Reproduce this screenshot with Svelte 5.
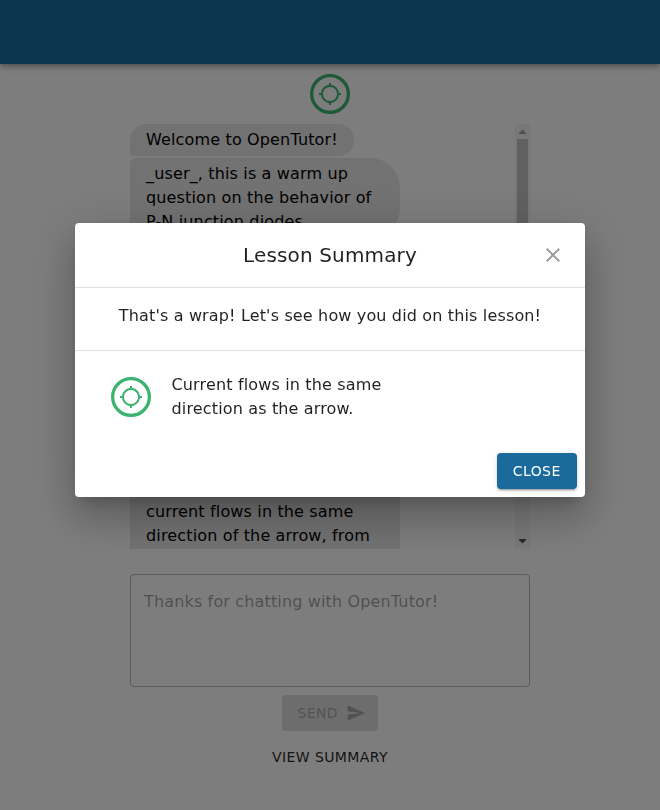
<script>
  const targetPath =
    'M20.94 11c-.46-4.17-3.77-7.48-7.94-7.94V1h-2v2.06C6.83 3.52 3.52 6.83 3.06 11H1v2h2.06c.46 4.17 3.77 7.48 7.94 7.94V23h2v-2.06c4.17-.46 7.48-3.77 7.94-7.94H23v-2h-2.06zM12 19c-3.87 0-7-3.13-7-7s3.13-7 7-7 7 3.13 7 7-3.13 7-7 7z';
</script>

{#snippet target()}
  <svg class="target" viewBox="0 0 44 44" width="40" height="40">
    <circle cx="22" cy="22" r="20.2" fill="none" stroke="#3cb371" stroke-width="3.6" />
    <svg x="8.8" y="8.8" width="26.4" height="26.4" viewBox="0 0 24 24"><path d={targetPath} /></svg>
  </svg>
{/snippet}

<div class="page">
  <header class="appbar"></header>
  <main>
    {@render target()}
    <div class="thread">
      <div class="messages">
        <div class="bubble first">Welcome to OpenTutor!</div>
        <div class="bubble second">_user_, this is a warm up question on the behavior of P-N junction diodes.</div>
        <div class="bubble last">current flows in the same direction of the arrow, from</div>
      </div>
      <div class="scrollbar">
        <svg class="up" width="15" height="15" viewBox="0 0 15 15"><path d="M4 10h7V9L7.5 5.5 4 9z" /></svg>
        <div class="thumb"></div>
        <svg class="down" width="15" height="15" viewBox="0 0 15 15"><path d="M4 5h7v1L7.5 9.5 4 6z" /></svg>
      </div>
    </div>
    <div class="field">Thanks for chatting with OpenTutor!</div>
    <button class="btn send" disabled>
      <span>Send</span>
      <svg viewBox="0 0 24 24" width="20" height="20"><path d="M2.01 21L23 12 2.01 3 2 10l15 2-15 2z" /></svg>
    </button>
    <button class="btn view">View Summary</button>
  </main>
</div>

<div class="backdrop">
  <div class="dialog" role="dialog">
    <div class="title">
      <h2>Lesson Summary</h2>
      <button class="x" aria-label="close">
        <svg viewBox="0 0 24 24" width="24" height="24"><path d="M19 6.41L17.59 5 12 10.59 6.41 5 5 6.41 10.59 12 5 17.59 6.41 19 12 13.41 17.59 19 19 17.59 13.41 12z" /></svg>
      </button>
    </div>
    <p class="wrap">That's a wrap! Let's see how you did on this lesson!</p>
    <div class="result">
      {@render target()}
      <p>Current flows in the same direction as the arrow.</p>
    </div>
    <div class="actions"><button class="btn close">Close</button></div>
  </div>
</div>

<style>
  :global(body) {
    margin: 0;
    overflow: hidden;
    background: #fafafa;
    font: 16px/24px "DejaVu Sans", sans-serif;
    letter-spacing: 0.00938em;
  }
  .page {
    height: 810px;
    background: #fafafa;
    color: #000;
  }
  .appbar {
    position: relative;
    height: 64px;
    background: #1b6a9c;
    box-shadow: 0 2px 4px -1px rgba(0, 0, 0, 0.2), 0 4px 5px rgba(0, 0, 0, 0.14), 0 1px 10px rgba(0, 0, 0, 0.12);
  }
  main {
    display: flex;
    flex-direction: column;
    align-items: center;
    width: 400px;
    margin: 0 auto;
    padding-top: 10px;
  }
  .target {
    flex: none;
    display: block;
    fill: #3cb371;
  }
  .thread {
    display: flex;
    width: 400px;
    height: 425px;
    margin-top: 10px;
    overflow: hidden;
  }
  .messages {
    flex: 1;
    display: flex;
    flex-direction: column;
    align-items: flex-start;
    gap: 2px;
  }
  .bubble {
    box-sizing: border-box;
    flex: none;
    max-width: 270px;
    padding: 4px 16px;
    background: #e4e4e4;
  }
  .first {
    border-radius: 30px 30px 30px 5px;
  }
  .second {
    width: 270px;
    border-radius: 5px 30px 30px 5px;
  }
  .last {
    width: 270px;
    height: 70px;
    margin-top: 256px;
  }
  .scrollbar {
    width: 15px;
    height: 425px;
    display: flex;
    flex-direction: column;
    align-items: center;
    background: #f1f1f1;
  }
  .scrollbar svg {
    flex: none;
  }
  .up {
    fill: #a3a3a3;
  }
  .down {
    margin-top: auto;
    fill: #505050;
  }
  .thumb {
    width: 11px;
    height: 160px;
    background: #c1c1c1;
  }
  .field {
    box-sizing: border-box;
    width: 400px;
    height: 113px;
    margin-top: 25px;
    padding: 15px 13px;
    border: 1px solid rgba(0, 0, 0, 0.26);
    border-radius: 4px;
    color: rgba(0, 0, 0, 0.38);
  }
  .btn {
    box-sizing: border-box;
    height: 36px;
    display: flex;
    align-items: center;
    justify-content: center;
    padding: 6px 16px;
    border: 0;
    border-radius: 4px;
    background: none;
    font: 14px/24px "DejaVu Sans", sans-serif;
    letter-spacing: 0.02857em;
    text-transform: uppercase;
    white-space: nowrap;
  }
  .send {
    width: 96px;
    margin-top: 8px;
    padding: 6px 12px 6px 15px;
    gap: 7.5px;
    background: rgba(0, 0, 0, 0.12);
    color: rgba(0, 0, 0, 0.26);
    fill: rgba(0, 0, 0, 0.26);
  }
  .view {
    margin-top: 8px;
    color: rgba(0, 0, 0, 0.87);
  }
  .backdrop {
    box-sizing: border-box;
    position: fixed;
    inset: 0;
    display: flex;
    align-items: center;
    justify-content: center;
    padding-bottom: 90px;
    background: rgba(0, 0, 0, 0.5);
  }
  .dialog {
    width: 510px;
    height: 274px;
    display: flex;
    flex-direction: column;
    border-radius: 4px;
    background: #fff;
    color: rgba(0, 0, 0, 0.87);
    box-shadow: 0 11px 15px -7px rgba(0, 0, 0, 0.2), 0 24px 38px 3px rgba(0, 0, 0, 0.14), 0 9px 46px 8px rgba(0, 0, 0, 0.12);
  }
  .title {
    position: relative;
    height: 64px;
    display: flex;
    align-items: center;
    justify-content: center;
  }
  h2 {
    margin: 0;
    font-size: 20px;
    font-weight: 400;
    line-height: 32px;
    letter-spacing: 0.0075em;
  }
  .x {
    position: absolute;
    right: 8px;
    top: 8px;
    display: flex;
    padding: 12px;
    border: 0;
    background: none;
    fill: #9e9e9e;
  }
  p {
    margin: 0;
  }
  .wrap {
    padding: 16px 0 22px;
    border: solid #e0e0e0;
    border-width: 1px 0;
    text-align: center;
  }
  .result {
    display: flex;
    align-items: center;
    gap: 20.5px;
    padding: 22px 36px 0;
  }
  .result p {
    width: 240px;
  }
  .actions {
    display: flex;
    justify-content: flex-end;
    margin-top: auto;
    padding: 8px;
  }
  .close {
    width: 80px;
    padding-right: 16.6px;
    padding-left: 16px;
    background: #1b6a9c;
    color: #fff;
    box-shadow: 0 3px 1px -2px rgba(0, 0, 0, 0.2), 0 2px 2px rgba(0, 0, 0, 0.14), 0 1px 5px rgba(0, 0, 0, 0.12);
  }
</style>
